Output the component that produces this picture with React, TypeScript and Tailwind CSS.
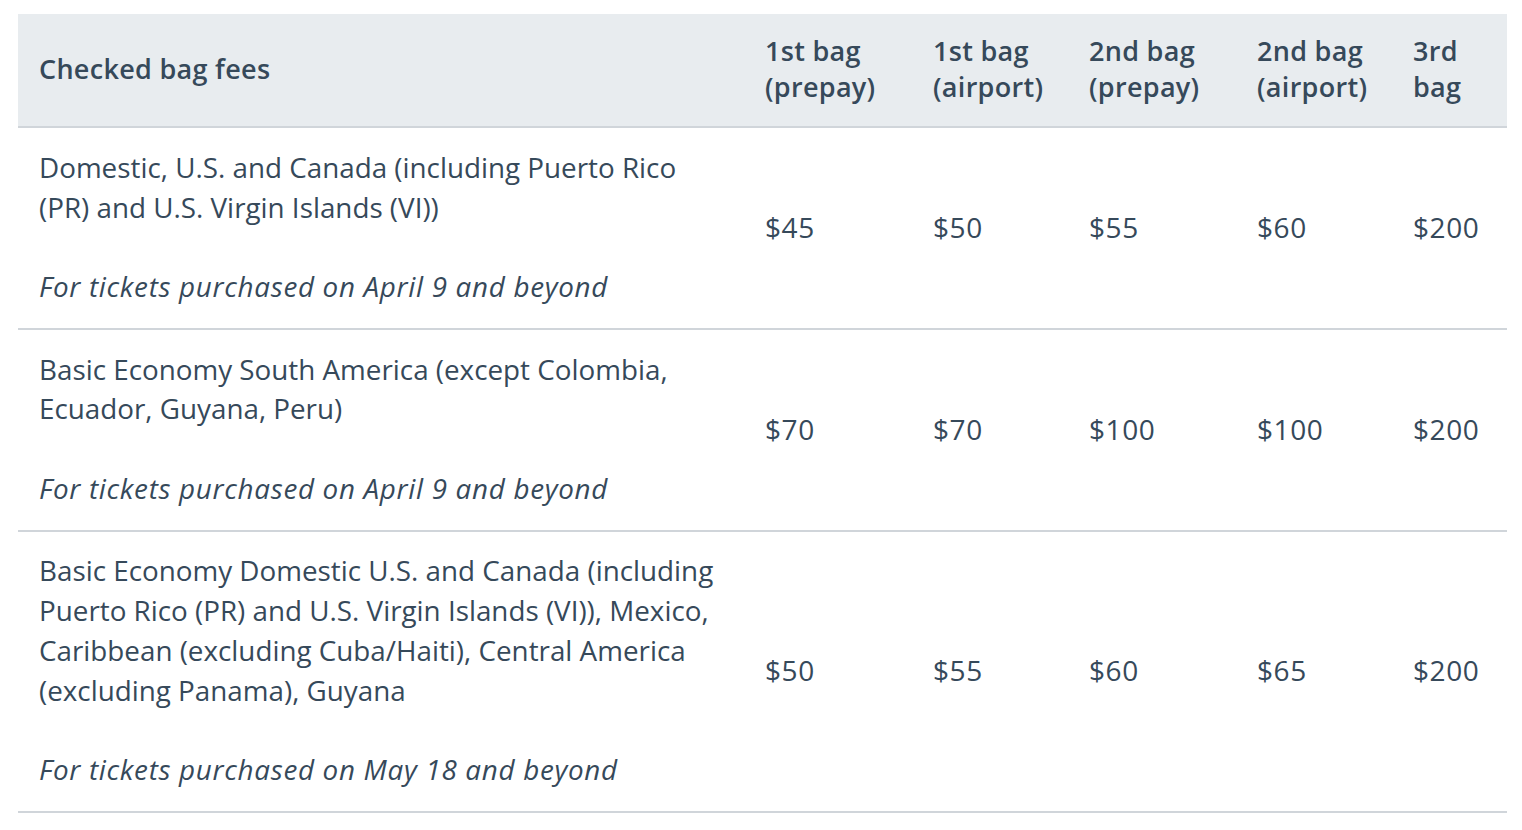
const rows = [
  {
    lines: ['Domestic, U.S. and Canada (including Puerto Rico', '(PR) and U.S. Virgin Islands (VI))'],
    note: 'For tickets purchased on April 9 and beyond',
    fees: ['$45', '$50', '$55', '$60', '$200'],
  },
  {
    lines: ['Basic Economy South America (except Colombia,', 'Ecuador, Guyana, Peru)'],
    note: 'For tickets purchased on April 9 and beyond',
    fees: ['$70', '$70', '$100', '$100', '$200'],
  },
  {
    lines: [
      'Basic Economy Domestic U.S. and Canada (including',
      'Puerto Rico (PR) and U.S. Virgin Islands (VI)), Mexico,',
      'Caribbean (excluding Cuba/Haiti), Central America',
      '(excluding Panama), Guyana',
    ],
    note: 'For tickets purchased on May 18 and beyond',
    fees: ['$50', '$55', '$60', '$65', '$200'],
  },
];

const headers = [
  ['1st bag', '(prepay)'],
  ['1st bag', '(airport)'],
  ['2nd bag', '(prepay)'],
  ['2nd bag', '(airport)'],
  ['3rd', 'bag'],
];

const widths = ['w-[168px]', 'w-[156px]', 'w-[168px]', 'w-[156px]', 'w-[115px]'];

export default function App() {
  return (
    <div className="min-h-screen bg-white pt-[14px] pl-[18px] pr-[15px] font-['Open_Sans',sans-serif] text-[#36495a]">
      <table className="w-full border-collapse text-left">
        <thead>
          <tr className="bg-[#e8ecef] border-b-2 border-[#d0d5da]">
            <th className="h-[113px] pl-[21px] pb-[2px] text-[27px] font-semibold leading-[36px] tracking-[0.3px] align-middle">
              Checked bag fees
            </th>
            {headers.map((h, i) => (
              <th key={i} className={`${widths[i]} pl-[21px] pb-[2px] text-[27px] font-semibold leading-[36px] tracking-[0.3px] align-middle whitespace-nowrap`}>
                {h[0]}
                <br />
                {h[1]}
              </th>
            ))}
          </tr>
        </thead>
        <tbody>
          {rows.map((r, i) => (
            <tr key={i} className="border-b-2 border-[#d0d5da]">
              <td className="pl-[21px] pt-[19.75px] pb-[21px] text-[27.8px] leading-[39.75px] align-middle whitespace-nowrap">
                {r.lines.map((l, j) => (
                  <div key={j}>{l}</div>
                ))}
                <div className="mt-[39.75px] italic tracking-[0.7px]">{r.note}</div>
              </td>
              {r.fees.map((f, j) => (
                <td key={j} className="pl-[21px] pb-[2px] text-[28px] leading-[40px] tracking-[0.6px] align-middle">
                  {f}
                </td>
              ))}
            </tr>
          ))}
        </tbody>
      </table>
    </div>
  );
}
